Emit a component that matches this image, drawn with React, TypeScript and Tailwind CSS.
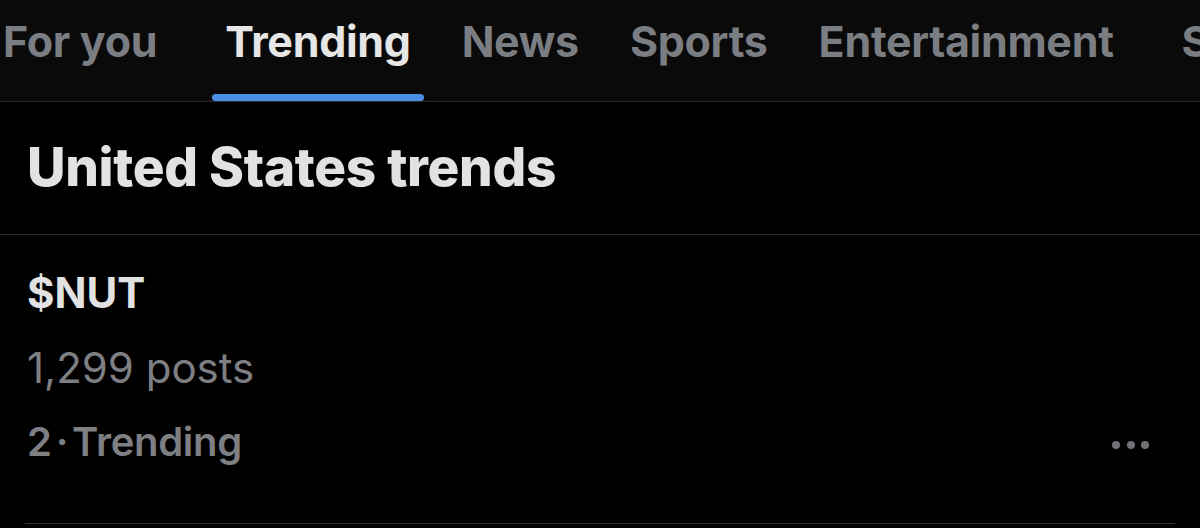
const tabs = ["For you", "Trending", "News", "Sports", "Entertainment", "Sports"];

export default function App() {
  return (
    <div
      className="h-[528px] w-[1200px] overflow-hidden bg-black"
      style={{ fontFamily: "Inter, 'Noto Sans', sans-serif" }}
    >
      <nav className="flex h-[102px] items-stretch overflow-hidden border-b border-[#2a2a2a] bg-[#0a0a0a] pl-[3px]">
        {tabs.map((tab, i) => (
          <div
            key={i}
            className={
              i === 0
                ? "relative flex shrink-0 items-center pb-[18px] pr-[55px]"
                : i === 4
                  ? "relative flex shrink-0 items-center pb-[18px] px-[13px] mr-[42px]"
                  : "relative flex shrink-0 items-center pb-[18px] px-[13px] mr-[25px]"
            }
          >
            <span
              className={
                "text-[43px] font-bold tracking-[-0.3px] " +
                (tab === "Trending" ? "text-[#e6e6e6]" : "text-[#7a7d82]")
              }
            >
              {tab}
            </span>
            {tab === "Trending" && (
              <span className="absolute bottom-0 left-0 right-0 h-[7px] rounded-full bg-[#4a90e2]" />
            )}
          </div>
        ))}
      </nav>

      <div className="flex h-[133px] items-center border-b border-[#2a2a2a] px-[27px]">
        <h1 className="text-[53px] font-extrabold tracking-[-0.3px] text-[#e2e2e2]">
          United States trends
        </h1>
      </div>

      <div className="relative px-[27px] pt-[30px]">
        <p className="text-[42px] font-bold leading-[56px] text-[#e2e2e2]">$NUT</p>
        <p className="mt-[22px] text-[42px] leading-[50px] text-[#7d7f83]">1,299 posts</p>
        <p className="mt-[24px] text-[40px] font-semibold leading-[50px] tracking-[-0.3px] text-[#7d7f83]">
          2<span className="mx-[4px]">·</span>Trending
        </p>
        <div className="absolute right-[51px] top-[206px] flex gap-[6.5px]">
          <span className="h-[8px] w-[8px] rounded-full bg-[#6f7175]" />
          <span className="h-[8px] w-[8px] rounded-full bg-[#6f7175]" />
          <span className="h-[8px] w-[8px] rounded-full bg-[#6f7175]" />
        </div>
      </div>
      <div className="mx-[25px] mt-[56px] h-px bg-[#2e2e2e]" />
    </div>
  );
}
